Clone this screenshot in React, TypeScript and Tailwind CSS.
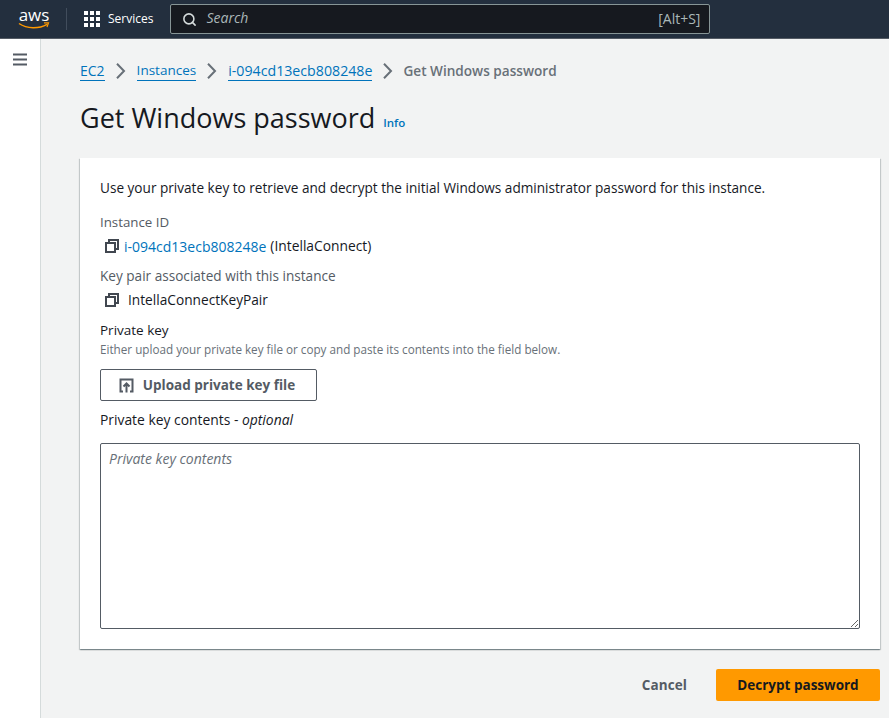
import { Search } from 'lucide-react'

function CopyIcon() {
  return (
    <svg className="h-4 w-4 shrink-0 text-[#414750]" viewBox="0 0 16 16" fill="none" stroke="currentColor" strokeWidth="2">
      <path d="M2 5h9v9H2z" />
      <path d="M5 5V2h9v9h-3" />
    </svg>
  )
}

function Chevron() {
  return (
    <svg className="mx-[8px] h-4 w-4 shrink-0 text-[#687078]" viewBox="0 0 16 16" fill="none" stroke="currentColor" strokeWidth="2">
      <path d="M4 .8 11 8l-7 7.2" />
    </svg>
  )
}

export default function App() {
  return (
    <div className="flex h-[718px] w-[889px] flex-col overflow-hidden bg-[#f2f3f3] font-['Open_Sans',sans-serif] text-[14px] text-[#16191f]">
      <header className="flex h-[39px] shrink-0 items-center border-b border-[#545b64] bg-[#232f3e] text-white">
        <div className="ml-[18px] flex w-[32px] flex-col items-center">
          <span className="text-[17px] leading-[14px] text-white">aws</span>
          <svg className="h-[8px] w-[32px]" viewBox="0 0 32 8" fill="none">
            <path d="M1 1.5c8 5.5 20 5.5 28 .8" stroke="#ff9900" strokeWidth="1.5" />
            <path d="M26 .8h4.5L29 5" stroke="#ff9900" strokeWidth="1.2" />
          </svg>
        </div>
        <div className="ml-[16px] h-[22px] w-px bg-[#414d5c]" />
        <svg className="ml-[17px] h-[16px] w-[16px]" viewBox="0 0 16 16" fill="white">
          <rect x="0" y="0" width="4" height="4" />
          <rect x="6" y="0" width="4" height="4" />
          <rect x="12" y="0" width="4" height="4" />
          <rect x="0" y="6" width="4" height="4" />
          <rect x="6" y="6" width="4" height="4" />
          <rect x="12" y="6" width="4" height="4" />
          <rect x="0" y="12" width="4" height="4" />
          <rect x="6" y="12" width="4" height="4" />
          <rect x="12" y="12" width="4" height="4" />
        </svg>
        <span className="ml-[8px] text-[12px] font-medium text-white">Services</span>
        <div className="ml-[17px] flex h-[30px] w-[540px] items-center rounded-[2px] border border-[#879596] bg-[#16191f] pl-[11px] pr-[9px] text-[#aab7b8]">
          <Search className="h-[15px] w-[15px] text-[#d5dbdb]" strokeWidth={2.5} />
          <span className="ml-[9px] mb-[3px] flex-1 text-[14px] italic">Search</span>
          <span className="mb-[2px] text-[14px]">[Alt+S]</span>
        </div>
      </header>

      <div className="flex min-h-0 flex-1">
        <aside className="w-[41px] shrink-0 border-r border-[#d5dbdb] bg-white pl-[13px] pt-[14px]">
          <svg className="h-[13px] w-[14px]" viewBox="0 0 14 13" fill="none" stroke="#545b64" strokeWidth="2">
            <path d="M0 1.5h14M0 6.5h14M0 11.5h14" />
          </svg>
        </aside>

        <main className="min-w-0 flex-1 pl-[39px] pr-[9px] pt-[22px]">
          <nav className="flex h-[20px] items-center">
            <a className="border-b border-[#0073bb] text-[14px] leading-[19px] text-[#0073bb]">EC2</a>
            <Chevron />
            <a className="border-b border-[#0073bb] text-[13.5px] leading-[19px] text-[#0073bb]">Instances</a>
            <Chevron />
            <a className="border-b border-[#0073bb] text-[14.2px] leading-[19px] text-[#0073bb]">i-094cd13ecb808248e</a>
            <Chevron />
            <span className="ml-[-1px] text-[13.6px] font-semibold text-[#687078]">Get Windows password</span>
          </nav>

          <div className="mt-[19px] flex h-[36px] items-center">
            <h1 className="text-[27px] font-normal leading-[36px] text-[#16191f]">Get Windows password</h1>
            <a className="ml-[8px] mt-[10px] text-[11.5px] font-semibold text-[#0073bb]">Info</a>
          </div>

          <section className="mt-[22px] h-[491px] bg-white px-[20px] pt-[20px] shadow-[0_1px_1px_0_rgba(0,28,36,0.3),1px_1px_1px_0_rgba(0,28,36,0.15),-1px_1px_1px_0_rgba(0,28,36,0.15)]">
            <p className="text-[13.6px] leading-[20px]">
              Use your private key to retrieve and decrypt the initial Windows administrator password for this instance.
            </p>

            <p className="mt-[14px] text-[13.3px] leading-[20px] text-[#545b64]">Instance ID</p>
            <div className="mt-[4px] flex h-[20px] items-center pl-[4px] text-[13.8px]">
              <CopyIcon />
              <a className="ml-[4px] text-[14px] text-[#0073bb]">i-094cd13ecb808248e</a>
              <span className="ml-[4px]">(IntellaConnect)</span>
            </div>

            <p className="mt-[10px] text-[13.6px] leading-[20px] text-[#545b64]">Key pair associated with this instance</p>
            <div className="mt-[4px] flex h-[20px] items-center pl-[4px] text-[13.7px]">
              <CopyIcon />
              <span className="ml-[8px]">IntellaConnectKeyPair</span>
            </div>

            <p className="mt-[10px] text-[13.5px] leading-[20px]">Private key</p>
            <p className="mt-[1px] text-[11.7px] leading-[16px] text-[#687078]">
              Either upload your private key file or copy and paste its contents into the field below.
            </p>

            <button
              className="mt-[12px] flex h-[32px] w-[217px] items-center justify-center rounded-[2px] border border-[#545b64] bg-white pr-[3px] text-[13.5px] font-bold text-[#545b64]"
              type="button"
            >
              <svg className="mr-[9px] h-[15px] w-[15px]" viewBox="0 0 15 15" fill="none" stroke="currentColor" strokeWidth="2">
                <path d="M4 13.5H1.5v-12h12v12H11" />
                <path d="M7.5 14.5V6M4.5 8.5l3-3 3 3" />
              </svg>
              Upload private key file
            </button>

            <p className="mt-[9px] text-[13.86px] leading-[20px]">
              Private key contents - <span className="italic">optional</span>
            </p>

            <textarea
              className="mt-[13px] block h-[186px] w-full rounded-[2px] border border-[#545b64] bg-white px-[8px] py-[4px] text-[14px] outline-none placeholder:italic placeholder:text-[#687078]"
              placeholder="Private key contents"
            />
          </section>

          <div className="mt-[20px] flex items-center justify-end">
            <button className="text-[13.5px] font-bold tracking-[0.1px] text-[#545b64]" type="button">
              Cancel
            </button>
            <button
              className="ml-[29px] h-[32px] w-[164px] rounded-[2px] bg-[#ff9900] text-[13.5px] font-bold text-[#16191f]"
              type="button"
            >
              Decrypt password
            </button>
          </div>
        </main>
      </div>
    </div>
  )
}
